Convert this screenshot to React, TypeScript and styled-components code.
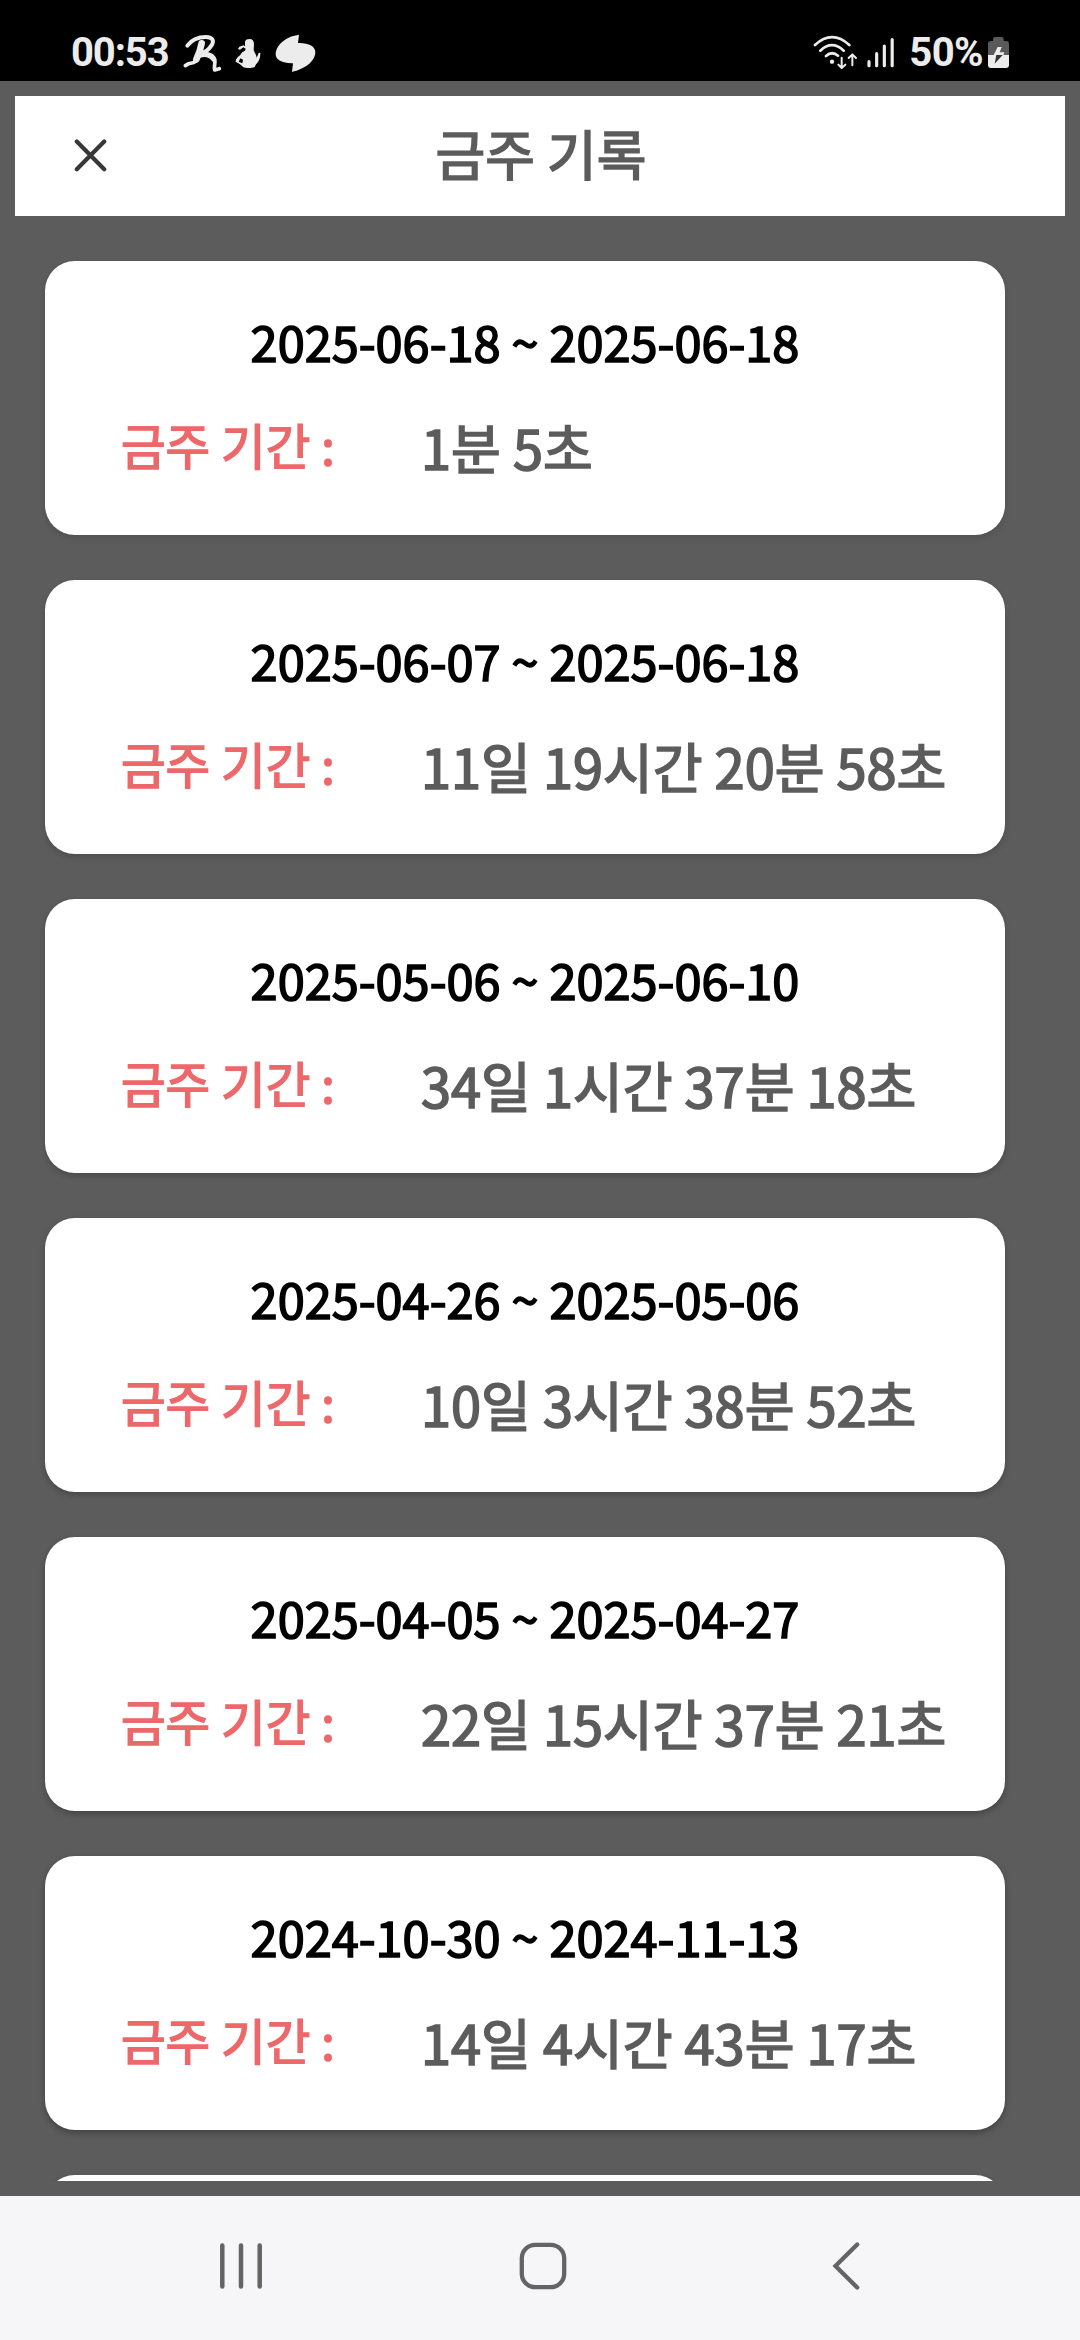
import React from 'react';
import styled, { createGlobalStyle } from 'styled-components';

const GlobalStyle = createGlobalStyle`
  * { box-sizing: border-box; }
  html, body { margin: 0; padding: 0; background: #5c5c5c; }
`;

const Screen = styled.div`
  width: 1080px;
  height: 2340px;
  display: flex;
  flex-direction: column;
  overflow: hidden;
  background: #5c5c5c;
  font-family: 'Noto Sans CJK KR', 'Noto Sans', sans-serif;
  font-weight: 400;
`;

const StatusBar = styled.header`
  flex: none;
  height: 81px;
  padding: 33px 70px 0 71px;
  display: flex;
  justify-content: space-between;
  align-items: flex-start;
  background: #000;
  color: #ececec;
`;

const StatusGroup = styled.div`
  display: flex;
  align-items: flex-start;
`;

const StatusText = styled.span<{ $tracking: number; $gap?: number }>`
  margin-left: ${(p) => p.$gap ?? 0}px;
  font-family: Roboto, sans-serif;
  font-weight: 700;
  font-size: 40px;
  line-height: 40px;
  letter-spacing: ${(p) => p.$tracking}px;
  white-space: nowrap;
`;

const StatusIcon = styled.svg<{ $w: number; $gap?: number }>`
  flex: none;
  display: block;
  width: ${(p) => p.$w}px;
  height: 42px;
  margin-left: ${(p) => p.$gap ?? 0}px;
`;

const Content = styled.main`
  flex: 1;
  min-height: 0;
  padding: 15px;
  display: flex;
  flex-direction: column;
`;

const TitleBar = styled.div`
  flex: none;
  height: 120px;
  display: grid;
  grid-template-columns: 150px 1fr 150px;
  align-items: center;
  background: #fff;
`;

const CloseButton = styled.button`
  display: flex;
  justify-content: center;
  align-items: center;
  height: 120px;
  padding: 0;
  border: 0;
  background: none;
`;

const Title = styled.h1`
  margin: 0;
  padding: 0 0 6px 2px;
  text-align: center;
  font-size: 54px;
  font-weight: 400;
  -webkit-text-stroke: 1.7px;
  line-height: 80px;
  color: #5c5c5c;
`;

const RecordList = styled.ul`
  flex: 1;
  min-height: 0;
  overflow: hidden;
  margin: 0;
  padding: 45px 60px 0 30px;
  list-style: none;
  display: flex;
  flex-direction: column;
  gap: 45px;
`;

const Card = styled.li<{ $shade: number }>`
  flex: none;
  height: 274px;
  padding-top: 42px;
  border-radius: 30px;
  background: #fff;
  box-shadow: 0 3px 6px rgba(0, 0, 0, ${(p) => p.$shade});
`;

const Period = styled.div`
  text-align: center;
  font-size: 48.7px;
  -webkit-text-stroke: 1.6px;
  line-height: 76px;
  color: #000;
  white-space: nowrap;
`;

const Row = styled.div`
  margin-top: 26px;
  padding-left: 76px;
  display: grid;
  grid-template-columns: 300px 1fr;
  align-items: start;
`;

const Label = styled.span`
  padding-top: 1px;
  font-size: 48.5px;
  -webkit-text-stroke: 1.5px;
  line-height: 76px;
  color: #ed686a;
  white-space: nowrap;
`;

const Duration = styled.span`
  font-size: 54.1px;
  -webkit-text-stroke: 1.7px;
  line-height: 84px;
  color: #5c5c5c;
  white-space: nowrap;
`;

const NavBar = styled.nav`
  flex: none;
  height: 144px;
  padding: 0 88px;
  display: grid;
  grid-template-columns: repeat(3, 1fr);
  background: #f6f6f8;
`;

const NavButton = styled.button<{ $shift: number }>`
  display: flex;
  justify-content: center;
  align-items: center;
  padding: 0 0 4px ${(p) => p.$shift}px;
  border: 0;
  background: none;
  color: #646464;
`;

interface DryRecord {
  from: string;
  to: string;
  duration: string;
}

const records: DryRecord[] = [
  { from: '2025-06-18', to: '2025-06-18', duration: '1분 5초' },
  { from: '2025-06-07', to: '2025-06-18', duration: '11일 19시간 20분 58초' },
  { from: '2025-05-06', to: '2025-06-10', duration: '34일 1시간 37분 18초' },
  { from: '2025-04-26', to: '2025-05-06', duration: '10일 3시간 38분 52초' },
  { from: '2025-04-05', to: '2025-04-27', duration: '22일 15시간 37분 21초' },
  { from: '2024-10-30', to: '2024-11-13', duration: '14일 4시간 43분 17초' },
];

const RunnerIcon = () => (
  <StatusIcon $w={42} $gap={13} viewBox="393 39 126 126" fill="none" stroke="#ececec" strokeLinecap="round" strokeLinejoin="round">
    <path d="M409 77C421 60 443 51 465 51C485 51 491 63 481 77C474 88 462 97 449 101" strokeWidth="12" />
    <path d="M452 70C449 87 443 103 436 118" strokeWidth="20" />
    <path d="M434 124C426 131 419 129 413 131L403 137" strokeWidth="11" />
    <path d="M452 100C472 98 487 106 491 118C494 130 488 138 491 150L505 146" strokeWidth="11" />
    <path d="M448 106C466 100 480 108 489 119" strokeWidth="14" />
  </StatusIcon>
);

const FitnessIcon = () => (
  <StatusIcon $w={28} $gap={10} viewBox="552 39 84 126" fill="#ececec">
    <path d="M585 66C586 59 592 57 599 57C608 57 612 63 612 73L611 89C613 98 619 104 620 113L626 99L631 98C632 113 626 126 618 133L614 141C605 145 589 145 580 142C575 135 566 130 557 125C556 119 562 112 571 105C573 99 578 95 585 92L587 86L580 82L570 89L564 87L568 80L580 76L585 79Z" />
    <path d="M571 115L579 119L577 130L566 125Z" fill="#000" />
  </StatusIcon>
);

const SwirlIcon = () => (
  <StatusIcon $w={42} $gap={13} viewBox="675 39 126 126" fill="#ececec">
    <path d="M747 44L744 69C776 68 796 79 796 97C795 126 762 148 726 156L729 130C698 131 677 120 677 103C678 73 710 49 747 44Z" />
  </StatusIcon>
);

const WifiIcon = () => (
  <StatusIcon $w={46} viewBox="69 39 138 126" fill="none" stroke="#ececec" strokeWidth="8" strokeLinecap="round" strokeLinejoin="round">
    <path d="M75 75Q126 28 178 75M91 92Q126 59 161 92M108 108Q126 92 144 107" />
    <circle cx="126" cy="125" r="6.5" fill="#ececec" stroke="none" />
    <path d="M155 113V143M145 134L155 144L166 134M187 136V105M176 114L187 103L198 114" strokeWidth="6" />
  </StatusIcon>
);

const SignalIcon = () => (
  <StatusIcon $w={30} $gap={7} viewBox="228 39 90 126" fill="none" stroke="#ececec" strokeWidth="9.5" strokeLinecap="round">
    <path d="M237 125V137M260 101V137M283 78V137M306.5 59V137" />
  </StatusIcon>
);

const BatteryIcon = () => (
  <StatusIcon $w={23} $gap={4} viewBox="591 39 69 126">
    <path d="M609 57Q609 51 615 51H635Q641 51 641 57V63H648Q657 63 657 72V105H594V72Q594 63 603 63H609Z" fill="#5a5a5a" />
    <path d="M594 105H657V135Q657 144 648 144H603Q594 144 594 135Z" fill="#ececec" />
    <path d="M623 81H635L629 97H643L640 105H611Z" fill="#ececec" />
    <path d="M619 105H638L614 131Z" fill="#333" />
  </StatusIcon>
);

export default function App() {
  return (
    <>
      <GlobalStyle />
      <Screen>
        <StatusBar>
          <StatusGroup>
            <StatusText $tracking={-1.1}>00:53</StatusText>
            <RunnerIcon />
            <FitnessIcon />
            <SwirlIcon />
          </StatusGroup>
          <StatusGroup>
            <WifiIcon />
            <SignalIcon />
            <StatusText $tracking={-0.6} $gap={13}>50%</StatusText>
            <BatteryIcon />
          </StatusGroup>
        </StatusBar>

        <Content>
          <TitleBar>
            <CloseButton aria-label="닫기">
              <svg width="34" height="34" viewBox="0 0 34 34" fill="none" stroke="#373737" strokeWidth="4.2" strokeLinecap="round">
                <path d="M3.8 2.6L31.2 30.2M31.2 2.6L3.8 30.2" />
              </svg>
            </CloseButton>
            <Title>금주 기록</Title>
          </TitleBar>

          <RecordList>
            {records.map((r, i) => (
              <Card key={r.from} $shade={0.12 + i * 0.035}>
                <Period>
                  {r.from} ~ {r.to}
                </Period>
                <Row>
                  <Label>금주 기간 :</Label>
                  <Duration>{r.duration}</Duration>
                </Row>
              </Card>
            ))}
            <Card $shade={0.3} />
          </RecordList>
        </Content>

        <NavBar>
          <NavButton $shift={5} aria-label="최근 앱">
            <svg width="46" height="50" viewBox="0 0 46 50" fill="none" stroke="currentColor" strokeWidth="4.5" strokeLinecap="round">
              <path d="M4.3 4.5V45.5M23 4.5V45.5M41.7 4.5V45.5" />
            </svg>
          </NavButton>
          <NavButton $shift={6} aria-label="홈">
            <svg width="50" height="50" viewBox="0 0 50 50" fill="none" stroke="currentColor" strokeWidth="4.3">
              <rect x="3.8" y="3.8" width="42.4" height="42.4" rx="13.5" />
            </svg>
          </NavButton>
          <NavButton $shift={10} aria-label="뒤로">
            <svg width="32" height="50" viewBox="0 0 32 50" fill="none" stroke="currentColor" strokeWidth="4.3" strokeLinecap="round">
              <path d="M27.2 3.5L5.5 25L27.2 46.5" />
            </svg>
          </NavButton>
        </NavBar>
      </Screen>
    </>
  );
}
